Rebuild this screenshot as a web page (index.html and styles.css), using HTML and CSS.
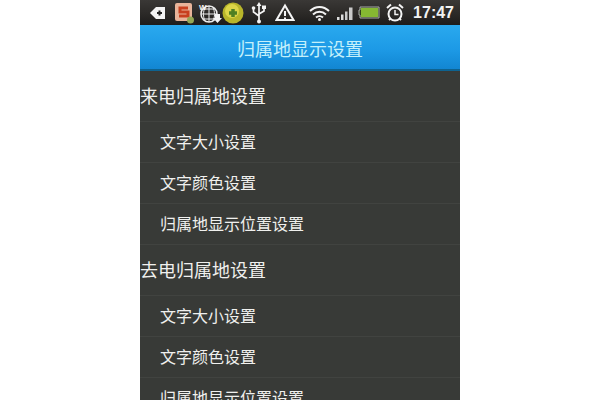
FILE: index.html
```html
<!DOCTYPE html>
<html lang="zh">
<head>
<meta charset="utf-8">
<title>归属地显示设置</title>
<link rel="stylesheet" href="styles.css">
</head>
<body>
<div class="phone">
  <div class="status">
    <div class="icons-left">
      <svg class="i-back" width="16" height="14" viewBox="0 0 16 14"><path d="M0 7 6 1h9v12H6z" fill="#f4f4f4"/><path d="M7 7h5M9.500 4.500v5" stroke="#222" stroke-width="2"/></svg>
      <svg class="i-s" width="22" height="22" viewBox="0 0 22 22"><rect x="1" y="1" width="17" height="18" rx="2" fill="#e8b49a"/><path d="M14 6H6v4h8v4H5" fill="none" stroke="#c8401f" stroke-width="3"/><circle cx="16.500" cy="18" r="3.500" fill="#94a856"/></svg>
      <svg class="i-web" width="24" height="22" viewBox="0 0 24 22"><circle cx="11" cy="12" r="8" fill="none" stroke="#eee" stroke-width="1.500"/><path d="M3 12h16M11 4v16M5 7h12M5 17h12M7 5c-2 5-2 10 0 14M15 5c2 5 2 10 0 14" fill="none" stroke="#eee"/><path d="M17 12h5v4h2l-4.500 5-4.500-5h2z" fill="#f4f4f4"/><text x="1" y="8" class="wtext">W</text></svg>
      <svg class="i-360" width="22" height="22" viewBox="0 0 22 22"><circle cx="11" cy="11" r="10.500" fill="#b8b52a"/><circle cx="10" cy="9" r="7" fill="#dcd548"/><path d="M7 11h8M11 7v8" stroke="#4f7f22" stroke-width="3.500"/></svg>
      <svg class="i-usb" width="16" height="22" viewBox="0 0 16 22"><path d="M8 2v18M8 14 2.500 10V7M8 12l5-3V6" fill="none" stroke="#f4f4f4" stroke-width="1.700"/><path d="M8 0 5.500 4h5z" fill="#f4f4f4"/><circle cx="2.500" cy="6" r="1.800" fill="#f4f4f4"/><rect x="11" y="3.500" width="4" height="3.500" fill="#f4f4f4"/><circle cx="8" cy="19.500" r="2" fill="#f4f4f4"/></svg>
      <svg class="i-warn" width="20" height="20" viewBox="0 0 20 20"><path d="M10 2.500 18.500 17h-17z" fill="none" stroke="#f4f4f4" stroke-width="2"/><path d="M10 8v5M10 14.500v2" stroke="#f4f4f4" stroke-width="2"/></svg>
    </div>
    <div class="icons-right">
      <svg class="i-wifi" width="21" height="16" viewBox="0 0 21 16"><path d="M1 6c5.500-5.500 13.500-5.500 19 0M4 9.500c3.800-3.600 9.200-3.600 13 0M7 12.500c2-1.800 5-1.800 7 0" fill="none" stroke="#f4f4f4" stroke-width="2"/><circle cx="10.500" cy="14.500" r="1.500" fill="#f4f4f4"/></svg>
      <svg class="i-signal" width="16" height="14" viewBox="0 0 16 14"><path d="M0 11h2.500v3H0zM4 8.500h2.500V14H4z" fill="#ddd"/><path d="M8 5.500h2.500V14H8zM12 1.500h3.500V14H12z" fill="#c9c9c9"/></svg>
      <svg class="i-batt" width="23" height="13" viewBox="0 0 23 13"><path d="M2 4h1V1h19v11H3V9H2z" fill="#31401c" stroke="#aaa" stroke-width="1"/><rect x="4" y="2" width="17" height="9" fill="#86b832"/></svg>
      <svg class="i-clock" width="18" height="19" viewBox="0 0 18 19"><circle cx="9" cy="11" r="6.500" fill="none" stroke="#f4f4f4" stroke-width="2"/><path d="M9 7v4.500h3.500" fill="none" stroke="#f4f4f4" stroke-width="1.500"/><path d="M1 5 5 1.500M17 5l-4-3.500M3 17l1.500-1.500M15 17l-1.500-1.500" stroke="#f4f4f4" stroke-width="2"/></svg>
      <span class="time">17:47</span>
    </div>
  </div>
  <div class="titlebar">归属地显示设置</div>
  <div class="list">
    <div class="row head">来电归属地设置</div>
    <div class="row item">文字大小设置</div>
    <div class="row item">文字颜色设置</div>
    <div class="row item">归属地显示位置设置</div>
    <div class="row head">去电归属地设置</div>
    <div class="row item">文字大小设置</div>
    <div class="row item">文字颜色设置</div>
    <div class="row item">归属地显示位置设置</div>
  </div>
</div>
</body>
</html>
```
FILE: styles.css
```css
html, body {
  margin: 0;
  height: 400px;
  overflow: hidden;
  background: #fff;
}
.phone {
  width: 320px;
  height: 400px;
  margin: 0 auto;
  overflow: hidden;
  background: #383a37;
  font-family: "Noto Sans CJK SC", "Liberation Sans", sans-serif;
}
.status {
  height: 25px;
  background: linear-gradient(#3a3836, #2a2826 60%, #1d1c1b);
  display: flex;
  justify-content: space-between;
  align-items: center;
  overflow: hidden;
}
.icons-left {
  display: flex;
  align-items: center;
  margin-left: 10px;
}
.icons-left svg { display: block; flex: none; }
.i-s { margin-left: 8px; }
.i-web { margin-left: 2px; }
.i-usb { margin-left: 7px; }
.i-warn { margin-left: 8px; }
.wtext {
  font: bold 8px "Liberation Sans", sans-serif;
  fill: #f4f4f4;
}
.icons-right {
  display: flex;
  align-items: center;
  margin-right: 6px;
}
.icons-right svg { display: block; flex: none; }
.i-signal { margin-left: 7px; }
.i-batt { margin-left: 4px; }
.i-clock { margin-left: 6px; }
.time {
  margin-left: 9px;
  color: #f2f2f2;
  font: bold 16px/24px "Liberation Sans", sans-serif;
}
.titlebar {
  height: 44px;
  text-align: center;
  font-size: 18px;
  line-height: 46px;
  color: #c4f0fb;
  background: linear-gradient(#2aa9ee, #1d9ae6 55%, #1286d2);
  border-bottom: 2px solid #0e6390;
}
.row {
  box-sizing: border-box;
  border-bottom: 1px solid #414340;
  color: #f0f0ee;
  display: flex;
  align-items: center;
  padding-bottom: 2px;
}
.head {
  height: 51px;
  font-size: 18px;
}
.item {
  height: 41px;
  padding-left: 20px;
  font-size: 16px;
}
```
